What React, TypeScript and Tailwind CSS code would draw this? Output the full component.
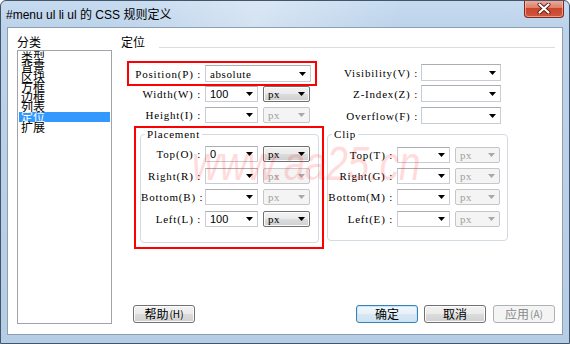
import React from 'react';

const cjk = "font-['Noto_Sans_CJK_SC',sans-serif]";
const lab =
  "font-['Liberation_Serif',serif] text-[11px] tracking-[0.8px] leading-[16px] whitespace-nowrap text-right text-black";
const serifVal = "font-['Liberation_Serif',serif] text-[11px] tracking-[0.6px] leading-[14px]";
const sansVal = "font-['Liberation_Sans',sans-serif] text-[11px] leading-[14px]";

function Arrow({ off = false }: { off?: boolean }) {
  return (
    <svg width="7" height="4" viewBox="0 0 7 4" className="shrink-0">
      <path d="M0 0H7L3.5 4Z" fill={off ? '#a8a8a8' : '#000'} />
    </svg>
  );
}

function Combo({
  value = '',
  w = 'w-[53px]',
  h = 'h-[16px]',
  serif = false,
}: {
  value?: string;
  w?: string;
  h?: string;
  serif?: boolean;
}) {
  return (
    <div
      className={`${w} ${h} flex items-center justify-between border border-[#c9ccd2] border-t-[#abadb3] bg-white pl-[4px] pr-[4px]`}
    >
      <span className={serif ? serifVal : sansVal}>{value}</span>
      <Arrow />
    </div>
  );
}

function Unit({ on = false, w = 'w-[47px]' }: { on?: boolean; w?: string }) {
  if (on) {
    return (
      <div
        className={`${w} flex h-[16px] items-center justify-between rounded-[2px] border border-[#707070] bg-[linear-gradient(#f2f2f2,#ebebeb_50%,#dddddd_50%,#cfcfcf)] pl-[4px] pr-[4px] shadow-[inset_0_0_0_1px_#fcfcfc]`}
      >
        <span className={serifVal}>px</span>
        <Arrow />
      </div>
    );
  }
  return (
    <div
      className={`${w} flex h-[16px] items-center justify-between rounded-[2px] border border-[#c4c6c9] bg-[#f4f4f4] pl-[4px] pr-[4px] text-[#a0a0a0]`}
    >
      <span className={serifVal}>px</span>
      <Arrow off />
    </div>
  );
}

function Row({
  label,
  lw,
  value,
  on,
  uw,
  cls = '',
}: {
  label: string;
  lw: string;
  value?: string;
  on?: boolean;
  uw?: string;
  cls?: string;
}) {
  return (
    <div className={`flex h-[16px] items-center ${cls}`}>
      <div className={`${lw} ${lab}`}>{label}</div>
      <div className="ml-[4px]">
        <Combo value={value} />
      </div>
      <div className="ml-[5px]">
        <Unit on={on} w={uw} />
      </div>
    </div>
  );
}

function Btn({ children, kind = 'normal' }: { children: React.ReactNode; kind?: 'normal' | 'default' | 'off' }) {
  const look =
    kind === 'default'
      ? 'border-[#3c7fb1] bg-[linear-gradient(#f1f7fc,#e6f0f8_50%,#d8e7f3_50%,#cfe1f0)] shadow-[inset_0_0_0_1px_#c6e6fa] text-black'
      : kind === 'off'
        ? 'border-[#adb2b5] bg-[#f4f4f4] text-[#8a8a8a]'
        : 'border-[#707070] bg-[linear-gradient(#f2f2f2,#ebebeb_50%,#dddddd_50%,#cfcfcf)] shadow-[inset_0_0_0_1px_#fcfcfc] text-black';
  return (
    <div
      className={`flex h-[18px] w-[62px] items-center justify-center rounded-[3px] border ${look} ${cjk} text-[12px] leading-[14px]`}
    >
      {children}
    </div>
  );
}

const cats = ['类型', '背景', '区块', '方框', '边框', '列表', '定位', '扩展'];

export default function App() {
  return (
    <div className="flex h-[344px] w-[570px] flex-col overflow-hidden rounded-t-[6px] border border-[#44556a] bg-[linear-gradient(180deg,#c6dbf0_0%,#bdd3ea_26px,#b6cde6_100%)]">
      {/* title bar */}
      <div className="flex h-[26px] shrink-0 items-start justify-between bg-[linear-gradient(100deg,rgba(255,255,255,0)_20%,rgba(255,255,255,0.35)_45%,rgba(255,255,255,0)_70%)] pl-[5px] pr-[5px]">
        <div className="pt-[7px] font-['Liberation_Sans','Noto_Sans_CJK_SC',sans-serif] text-[12px] leading-[14px] text-black">
          #menu ul li ul 的 CSS 规则定义
        </div>
        <div className="-mt-px flex h-[18px] w-[40px] items-center justify-center rounded-b-[4px] border border-t-0 border-[#7d2a1c] bg-[linear-gradient(#eeb0a2,#de8068_45%,#c9452e_50%,#d2553c)] shadow-[inset_0_0_0_1px_rgba(255,200,190,0.6)]">
          <svg width="14" height="11" viewBox="0 0 14 11">
            <path d="M2.5 1.5L11.5 9.5M11.5 1.5L2.5 9.5" stroke="#5a1d12" strokeWidth="4" strokeLinecap="round" />
            <path d="M2.5 1.5L11.5 9.5M11.5 1.5L2.5 9.5" stroke="#fff" strokeWidth="2.2" strokeLinecap="round" />
          </svg>
        </div>
      </div>

      {/* client area */}
      <div className="relative mx-[6px] mb-[8px] flex flex-1 border border-[#8d9fb4] bg-white">
        {/* category list */}
        <div className="flex flex-col pl-[9px]">
          <div className={`pt-[7px] ${cjk} text-[12px] leading-[14px] text-black`}>分类</div>
          <div className="mt-[1px] h-[274px] w-[95px] border border-[#a0a4aa] pt-[1px]">
            {cats.map((c, i) => (
              <div
                key={c}
                className={`mx-px h-[10px] pl-[2px] ${cjk} text-[12px] leading-[10px] ${
                  i === 6 ? 'bg-[#3399ff] text-white' : 'text-black'
                }`}
              >
                {c}
              </div>
            ))}
          </div>
        </div>

        {/* panel */}
        <div className="ml-[9px] flex flex-1 flex-col pb-[11px] pr-[7px]">
          <div className="flex items-end pt-[7px]">
            <div className={`${cjk} text-[12px] leading-[14px] text-black`}>定位</div>
            <div className="mb-px ml-[14px] h-px flex-1 bg-[#dcdcdc]" />
          </div>

          <div className="mt-[12px] flex items-start">
            {/* left column */}
            <div className="ml-[6px] flex w-[196px] flex-col">
              <div className="flex h-[25px] w-[190px] items-center border-2 border-[#ff0000]">
                <div className={`w-[72px] ${lab}`}>Position(P) :</div>
                <div className="ml-[4px]">
                  <Combo value="absolute" w="w-[106px]" h="h-[17px]" serif />
                </div>
              </div>
              <Row label="Width(W) :" lw="w-[74px]" value="100" on />
              <Row label="Height(I) :" lw="w-[74px]" cls="mt-[5px]" />

              <div className="ml-[7px] mt-[3px] h-[123px] w-[190px] border-2 border-[#ff0000] pl-[4px]">
                <fieldset className="h-[115px] w-[179px] rounded-[4px] border border-[#d3dbe2] px-0 pb-0 pt-[6px]">
                  <legend className="ml-[4px] px-[2px] font-['Liberation_Serif',serif] text-[11px] leading-[12px] tracking-[0.8px] text-black">
                    Placement
                  </legend>
                  <div className="flex flex-col">
                    <Row label="Top(O) :" lw="w-[60px]" value="0" on />
                    <Row label="Right(R) :" lw="w-[60px]" cls="mt-[6px]" />
                    <Row label="Bottom(B) :" lw="w-[60px]" cls="mt-[5px]" />
                    <Row label="Left(L) :" lw="w-[60px]" value="100" on cls="mt-[6px]" />
                  </div>
                </fieldset>
              </div>
            </div>

            {/* right column */}
            <div className="ml-[4px] mt-[3px] flex flex-col">
              <div className="flex h-[17px] items-center">
                <div className={`w-[91px] ${lab}`}>Visibility(V) :</div>
                <div className="ml-[3px]">
                  <Combo w="w-[80px]" h="h-[17px]" />
                </div>
              </div>
              <div className="mt-[4px] flex h-[17px] items-center">
                <div className={`w-[91px] ${lab}`}>Z-Index(Z) :</div>
                <div className="ml-[3px]">
                  <Combo w="w-[80px]" h="h-[17px]" />
                </div>
              </div>
              <div className="mt-[5px] flex h-[17px] items-center">
                <div className={`w-[91px] ${lab}`}>Overflow(F) :</div>
                <div className="ml-[3px]">
                  <Combo w="w-[80px]" h="h-[17px]" />
                </div>
              </div>

              <fieldset className="mt-[4px] h-[113px] w-[181px] rounded-[4px] border border-[#d3dbe2] px-0 pb-0 pt-[7px]">
                <legend className="ml-[4px] px-[2px] font-['Liberation_Serif',serif] text-[11px] leading-[12px] tracking-[0.8px] text-black">
                  Clip
                </legend>
                <div className="flex flex-col">
                  <Row label="Top(T) :" lw="w-[65px]" uw="w-[45px]" />
                  <Row label="Right(G) :" lw="w-[65px]" uw="w-[45px]" cls="mt-[5px]" />
                  <Row label="Bottom(M) :" lw="w-[65px]" uw="w-[45px]" cls="mt-[5px]" />
                  <Row label="Left(E) :" lw="w-[65px]" uw="w-[45px]" cls="mt-[6px]" />
                </div>
              </fieldset>
            </div>
          </div>

          {/* buttons */}
          <div className="mt-auto flex items-center">
            <div className="ml-[12px]">
              <Btn>
                帮助<span className="ml-[1px] text-[10px]">(H)</span>
              </Btn>
            </div>
            <div className="flex-1" />
            <Btn kind="default">确定</Btn>
            <div className="ml-[6px]">
              <Btn>取消</Btn>
            </div>
            <div className="ml-[7px]">
              <Btn kind="off">
                应用<span className="ml-[1px] text-[10px]">(A)</span>
              </Btn>
            </div>
          </div>
        </div>

        {/* watermark */}
        <div className="pointer-events-none absolute left-[184px] top-[112px] origin-top-left scale-x-[0.8] whitespace-nowrap font-['Liberation_Sans',sans-serif] text-[48px] italic leading-none text-[#ff0000]/[0.14]">
          www.aa25.cn
        </div>
      </div>
    </div>
  );
}
